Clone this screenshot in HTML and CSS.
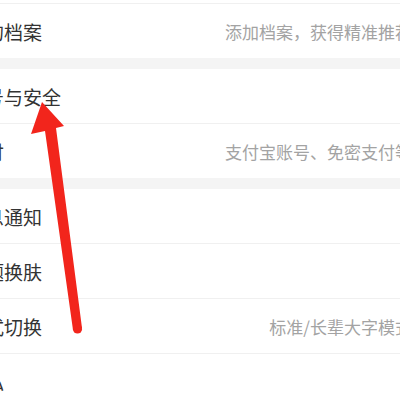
FILE: index.html
```html
<!DOCTYPE html>
<html lang="zh-CN">
<head>
<meta charset="utf-8">
<title>设置</title>
<link rel="stylesheet" href="styles.css">
</head>
<body>
<div class="screen">
  <div class="list">
    <div class="group first">
      <div class="row"><span class="label">我的档案</span><span class="value">添加档案，获得精准推荐</span></div>
    </div>
    <div class="group">
      <div class="row"><span class="label">账号与安全</span></div>
      <div class="row"><span class="label">支付</span><span class="value">支付宝账号、免密支付等</span></div>
    </div>
    <div class="group">
      <div class="row"><span class="label">消息通知</span></div>
      <div class="row"><span class="label">主题换肤</span></div>
      <div class="row"><span class="label">模式切换</span><span class="value">标准/长辈大字模式</span></div>
      <div class="row"><span class="label">隐私</span></div>
    </div>
  </div>
  <svg class="arrow" width="400" height="405" viewBox="0 0 400 405">
    <polygon fill="#f2251c" points="42,102 64,126 56,128 82,328 73,330 45,131 31,134"/>
    <circle fill="#f2251c" cx="77.5" cy="329" r="4.6"/>
  </svg>
</div>
</body>
</html>
```
FILE: styles.css
```css
html, body {
  margin: 0;
  padding: 0;
  background: #ffffff;
}
.screen {
  position: relative;
  width: 400px;
  height: 405px;
  overflow: hidden;
  background: #ffffff;
  font-family: "Noto Sans CJK SC", "Noto Sans", sans-serif;
}
.list {
  margin-left: -34px;
  width: 446px;
  padding-top: 3px;
}
.group {
  background: #ffffff;
  border-top: 1px solid #f0f0f0;
}
.group + .group {
  border-top: none;
  margin-top: 11px;
}
.list {
  background: #f4f4f4;
}
.group.first {
  box-shadow: 0 -3px 0 #ffffff;
}
.row {
  display: flex;
  align-items: center;
  justify-content: space-between;
  height: 54px;
  white-space: nowrap;
}
.row + .row {
  border-top: 1px solid #f0f0f0;
}
.label {
  font-size: 19px;
  color: #333333;
}
.value {
  font-size: 17px;
  color: #a3a3a3;
}
.arrow {
  position: absolute;
  left: 0;
  top: 0;
}
```
